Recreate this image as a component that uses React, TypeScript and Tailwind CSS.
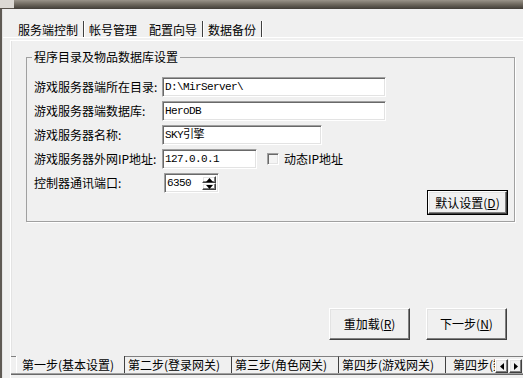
const cjk = "font-['Noto_Sans_CJK_SC','Liberation_Sans',sans-serif]";
const mono = "font-['Liberation_Mono','Noto_Sans_CJK_SC',monospace] text-[11px] tracking-[-0.6px]";

const sunken =
  "border border-t-[#a0a0a0] border-l-[#a0a0a0] border-r-white border-b-white shadow-[inset_1px_1px_0_#696969,inset_-1px_-1px_0_#e3e3e3]";
const raised =
  "border border-t-white border-l-white border-r-[#404040] border-b-[#404040] shadow-[inset_-1px_-1px_0_#808080,inset_1px_1px_0_#e3e3e3]";

const topTabs = [
  { label: "服务端控制", sep: true, active: false },
  { label: "帐号管理", sep: false, active: false },
  { label: "配置向导", sep: true, active: true },
  { label: "数据备份", sep: true, active: false },
];

const fields = [
  { label: "游戏服务器端所在目录:", value: "D:\\MirServer\\", width: "w-[224px]", check: false },
  { label: "游戏服务器端数据库:", value: "HeroDB", width: "w-[224px]", check: false },
  { label: "游戏服务器名称:", value: "SKY引擎", width: "w-[160px]", check: false },
  { label: "游戏服务器外网IP地址:", value: "127.0.0.1", width: "w-[95px]", check: true },
];

const steps = [
  "第一步(基本设置)",
  "第二步(登录网关)",
  "第三步(角色网关)",
  "第四步(游戏网关)",
  "第四步(数据网关)",
];

function Arrow({ dir }: { dir: "up" | "down" | "left" | "right" }) {
  const pts = {
    up: "0,4 3.5,0 7,4",
    down: "0,0 3.5,4 7,0",
    left: "4,0 0,3.5 4,7",
    right: "0,0 4,3.5 0,7",
  }[dir];
  const vertical = dir === "up" || dir === "down";
  return (
    <svg width={vertical ? 7 : 4} height={vertical ? 4 : 7} aria-hidden>
      <polygon points={pts} fill="#000" />
    </svg>
  );
}

function Field({ value, width }: { value: string; width: string }) {
  return (
    <div className={`${width} h-[20px] bg-white ${sunken} flex items-center pl-[2px] ${mono} text-black`}>
      {value}
    </div>
  );
}

function Button({ children, className = "" }: { children: React.ReactNode; className?: string }) {
  return (
    <div className={`flex items-center justify-center bg-[#f0f0f0] ${raised} text-[12px] ${className}`}>
      {children}
    </div>
  );
}

export default function App() {
  return (
    <div className={`w-[523px] h-[378px] overflow-hidden bg-[#f0f0f0] text-black ${cjk} flex flex-col`}>
      {/* window top edge */}
      <div className="h-[9px] shrink-0 flex">
        <div className="w-[14px] bg-[#dcd9d4] border-b border-[#57524b]" />
        <div className="flex-1 bg-linear-to-b from-[#9a948a] via-[#6c665c] to-[#413d37]" />
      </div>

      <div className="flex flex-1 min-h-0">
        <div className="w-[2px] bg-[#5f5a54]" />
        <div className="w-[1px] bg-[#e4e4e4]" />

        <div className="flex-1 flex flex-col min-w-0">
          {/* top flat tabs */}
          <div className="h-[28px] shrink-0 pt-[13px] pl-[15px] flex items-start">
            {topTabs.map((t) => (
              <div key={t.label} className="flex h-[16px]">
                <span className={`text-[12px] leading-[16px] whitespace-nowrap ${t.active ? "pl-[1px]" : ""}`}>
                  {t.label}
                </span>
                <div className={`ml-[5px] mr-[4px] -mt-[1px] flex ${t.sep ? "" : "opacity-0"}`}>
                  <div className="w-[1px] bg-[#404040]" />
                  <div className="w-[1px] bg-white" />
                </div>
              </div>
            ))}
          </div>
          <div className="h-[1px] shrink-0 bg-white" />
          <div className="h-[2px] shrink-0" />

          {/* bottom-tabbed page */}
          <div className="flex-1 min-h-0 flex flex-col ml-[7px] border-l border-t border-white">
            <div className="flex-1 min-h-0 flex flex-col border-l border-[#e3e3e3]">
              <fieldset className="mt-[9px] ml-[14px] w-[489px] border border-[#a0a0a0] shadow-[1px_1px_0_#fff] px-0 pt-[13px] pb-[6px]">
                <legend className="ml-[5px] px-[2px] text-[12px] leading-[14px]">程序目录及物品数据库设置</legend>
                <div className="flex flex-col gap-[4px] pl-[7px] pr-[6px]">
                  {fields.map((f) => (
                    <div key={f.label} className="flex items-center h-[20px]">
                      <span className="w-[128px] text-[12px] leading-[14px] whitespace-nowrap">{f.label}</span>
                      <Field value={f.value} width={f.width} />
                      {f.check && (
                        <div className="flex items-center ml-[10px]">
                          <div className={`w-[12px] h-[12px] bg-[#f4f4f4] ${sunken}`} />
                          <span className="ml-[5px] text-[12px] leading-[14px]">动态IP地址</span>
                        </div>
                      )}
                    </div>
                  ))}

                  <div className="flex justify-between items-start">
                    <div className="flex items-center h-[20px]">
                      <span className="w-[130px] text-[12px] leading-[14px]">控制器通讯端口:</span>
                      <div className={`w-[55px] h-[20px] bg-white ${sunken} flex items-stretch p-[2px]`}>
                        <span className={`flex-1 flex items-center ${mono}`}>6350</span>
                        <div className="w-[14px] flex flex-col">
                          <div className={`flex-1 flex items-center justify-center ${raised}`}>
                            <Arrow dir="up" />
                          </div>
                          <div className={`flex-1 flex items-center justify-center ${raised}`}>
                            <Arrow dir="down" />
                          </div>
                        </div>
                      </div>
                    </div>
                    <div className="mt-[17px] border border-black">
                      <Button className="w-[79px] h-[23px]">
                        默认设置(<u>D</u>)
                      </Button>
                    </div>
                  </div>
                </div>
              </fieldset>

              <div className="mt-auto mb-[16px] flex justify-end gap-[16px] pr-[16px]">
                <Button className="w-[81px] h-[32px]">
                  重加载(<u>R</u>)
                </Button>
                <Button className="w-[81px] h-[32px]">
                  下一步(<u>N</u>)
                </Button>
              </div>
            </div>

            {/* bottom tabs */}
            <div className="h-[17px] shrink-0 flex">
              <div className="flex-1 min-w-0 flex overflow-hidden">
                <div className="w-[5px] shrink-0 border-t border-[#808080]" />
                {steps.map((s, i) =>
                  i === 0 ? (
                    <div
                      key={s}
                      className="shrink-0 w-[109px] border-l border-white border-r border-r-[#404040] pl-[5px] pt-[1px] text-[12px] leading-[16px] whitespace-nowrap"
                    >
                      {s}
                    </div>
                  ) : (
                    <div
                      key={s}
                      className={`shrink-0 w-[107px] border-t border-[#808080] border-r border-r-[#404040] text-[12px] leading-[15px] whitespace-nowrap ${i === 4 ? "pl-[7px]" : "pl-[3px]"}`}
                    >
                      {s}
                    </div>
                  )
                )}
              </div>
              <div className="shrink-0 flex gap-[1px] pt-[2px] pr-[1px] border-t border-[#808080]">
                <div className={`w-[13px] h-[14px] flex items-center justify-center ${raised}`}>
                  <Arrow dir="left" />
                </div>
                <div className={`w-[13px] h-[14px] flex items-center justify-center ${raised}`}>
                  <Arrow dir="right" />
                </div>
              </div>
            </div>
            <div className="h-[1px] shrink-0 bg-[#a0a0a0]" />
            <div className="h-[1px] shrink-0 bg-[#696969]" />
            <div className="h-[3px] shrink-0" />
          </div>
        </div>
      </div>
    </div>
  );
}
